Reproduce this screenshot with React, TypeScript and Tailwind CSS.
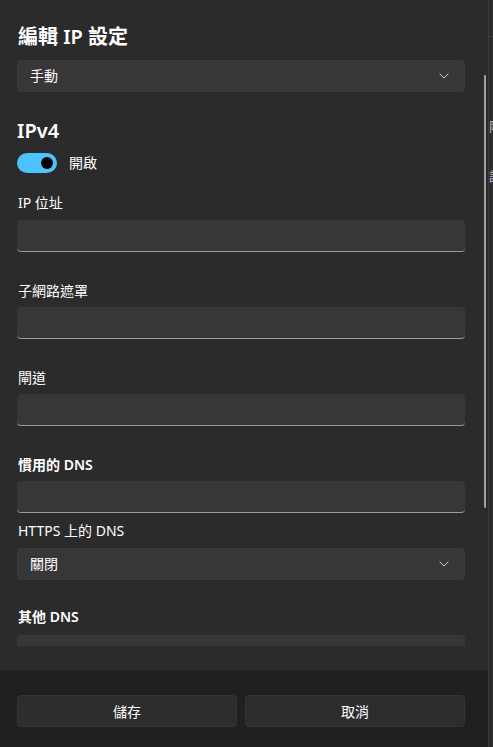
import React from 'react';

const FONT = '"Noto Sans", "Noto Sans CJK TC", sans-serif';

function Chevron() {
  return (
    <svg width="10" height="6" viewBox="0 0 10 6" className="shrink-0">
      <path d="M0.6 0.6 L5 5 L9.4 0.6" fill="none" stroke="#cfcfcf" strokeWidth="1" />
    </svg>
  );
}

function Select({ value }: { value: string }) {
  return (
    <div className="h-8 rounded-[4px] bg-[#373737] border border-[#3a3a3a] flex items-center justify-between pl-[12px] pr-[15px]">
      <span className="text-[14px] text-white leading-5">{value}</span>
      <Chevron />
    </div>
  );
}

function TextBox() {
  return <div className="h-8 rounded-[4px] bg-[#373737] border-b border-b-[#9b9b9b]" />;
}

function Label({ text, bold }: { text: string; bold?: boolean }) {
  return (
    <p className={`text-[14px] leading-5 text-white ${bold ? 'font-semibold' : ''}`}>{text}</p>
  );
}

export default function App() {
  return (
    <div className="w-[493px] h-[747px] flex bg-[#2b2b2b] overflow-hidden" style={{ fontFamily: FONT }}>
      {/* dialog */}
      <div className="w-[489px] h-full flex flex-col border-r border-[#3c3c3c] shrink-0">
        <div className="h-[670px] flex items-start bg-[#2b2b2b]">
          <div className="w-[465px] h-[646px] overflow-hidden pl-[17px] shrink-0">
            <h1 className="text-[20px] leading-7 font-semibold text-white mt-[23px] pl-[1px]">編輯 IP 設定</h1>
            <div className="mt-[9px]">
              <Select value="手動" />
            </div>

            <h2 className="text-[20px] leading-7 font-semibold text-white mt-[25px]">IPv4</h2>
            <div className="flex items-center gap-3 mt-[8px]">
              <div className="w-10 h-5 rounded-full bg-[#4cc2ff] flex items-center justify-end pr-[4px]">
                <div className="w-3 h-3 rounded-full bg-black" />
              </div>
              <span className="text-[14px] leading-5 text-white">開啟</span>
            </div>

            <div className="mt-[20px] pl-[1px]"><Label text="IP 位址" /></div>
            <div className="mt-[7px]"><TextBox /></div>

            <div className="mt-[29px] pl-[1px]"><Label text="子網路遮罩" /></div>
            <div className="mt-[6px]"><TextBox /></div>

            <div className="mt-[29px] pl-[1px]"><Label text="閘道" /></div>
            <div className="mt-[6px]"><TextBox /></div>

            <div className="mt-[29px] pl-[1px]"><Label text="慣用的 DNS" bold /></div>
            <div className="mt-[6px]"><TextBox /></div>

            <div className="mt-[8px] pl-[1px]"><Label text="HTTPS 上的 DNS" /></div>
            <div className="mt-[7px]">
              <Select value="關閉" />
            </div>

            <div className="mt-[27px] pl-[1px]"><Label text="其他 DNS" bold /></div>
            <div className="mt-[8px]"><TextBox /></div>
          </div>

          {/* scrollbar */}
          <div className="ml-[19px] mt-[75px] w-[2px] h-[433px] rounded-full bg-[#a0a0a0] shrink-0" />
        </div>

        <div className="flex-1 bg-[#202020] flex gap-2 pl-[17px] pr-[23px] pt-[25px]">
          <button className="flex-1 h-8 rounded-[4px] bg-[#2d2d2d] border border-[#343434] text-[14px] text-white">儲存</button>
          <button className="flex-1 h-8 rounded-[4px] bg-[#2d2d2d] border border-[#343434] text-[14px] text-white">取消</button>
        </div>
      </div>

      {/* sliver of the page behind */}
      <div className="flex-1 overflow-hidden bg-[#2b2b2b] text-[13px] text-[#bdbdbd] whitespace-nowrap">
        <div className="border-b border-[#3a3a3a] h-[37px]" />
        <p className="mt-[79px] leading-5">剛</p>
        <p className="mt-[30px] leading-5">請</p>
      </div>
    </div>
  );
}
